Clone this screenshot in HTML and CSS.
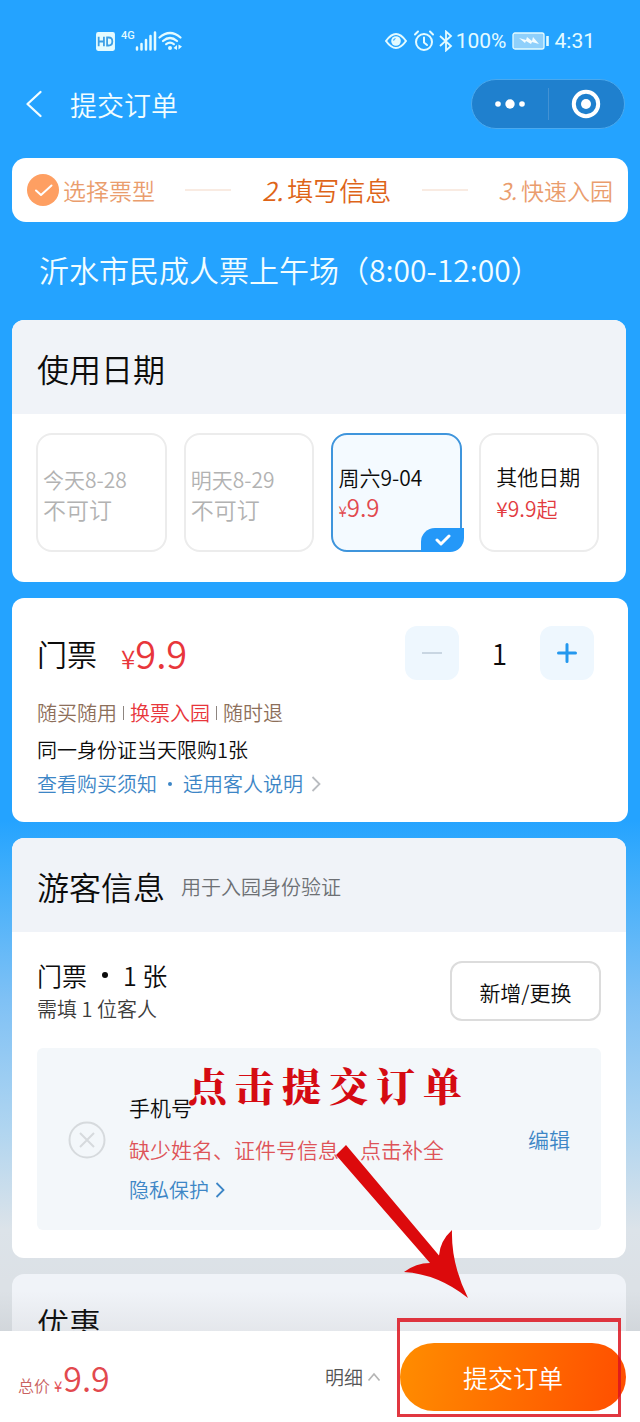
FILE: index.html
```html
<!DOCTYPE html>
<html lang="zh-CN">
<head>
<meta charset="utf-8">
<meta name="viewport" content="width=device-width, initial-scale=1">
<title>提交订单</title>
<link rel="stylesheet" href="styles.css">
</head>
<body>
<div class="app">
  <div class="content">
    <div class="status">
      <div class="status-group">
        <svg class="hd-icon" width="21" height="21" viewBox="0 0 20 20"><rect x="1" y="1" width="18" height="18" rx="2" fill="#e4fbff"/><path d="M3.500 5.500v9M8.500 5.500v9M3.500 10h5M11.500 6.200v7.600h1.500q3.500 0 3.500-3.800t-3.500-3.800z" fill="none" stroke="#3b9fe6" stroke-width="1.700"/></svg>
        <span class="net">4G</span>
        <svg class="bars-icon" width="22" height="20" viewBox="0 0 22 20"><path d="M2 16.500v2M6.500 13v5.500M11 9v9.500M15.500 5v13.500M20 1.500v17" stroke="#e4fbff" stroke-width="2.500" stroke-linecap="round"/></svg>
        <svg class="wifi-icon" width="24" height="20" viewBox="0 0 24 20"><g fill="none" stroke="#e4fbff" stroke-width="2.200" stroke-linecap="round"><path d="M1.500 6.500q10.500-9 21 0M5 10q7-6 14 0M8.200 13.200q3.800-3 7.600 0"/></g><circle cx="12" cy="17" r="2" fill="#e4fbff"/><path d="M19 14v5l-3.500-2zM20.500 13.500v5l3.500-3z" fill="#e4fbff"/></svg>
      </div>
      <div class="status-group">
        <svg width="22" height="20" viewBox="0 0 22 20"><path d="M1 10Q11-4 21 10Q11 24 1 10z" fill="none" stroke="#e4fbff" stroke-width="2"/><circle cx="11" cy="10" r="4.800" fill="#e4fbff"/><path d="M8.500 9.500a3 3 0 0 1 2-2" fill="none" stroke="#24a3ff" stroke-width="1.200"/></svg>
        <svg class="alarm-icon" width="22" height="22" viewBox="0 0 22 22"><g fill="none" stroke="#e4fbff" stroke-width="2" stroke-linecap="round"><circle cx="11" cy="12" r="8"/><path d="M11 7.500v5l3 2.500M2 4.500l3-3M20 4.500l-3-3"/></g></svg>
        <svg class="bt-icon" width="14" height="22" viewBox="0 0 14 22"><path d="M1 6l11 10-5 4.500v-19L12 6 1 16" fill="none" stroke="#e4fbff" stroke-width="1.800"/></svg>
        <span class="status-text">100%</span>
        <svg class="battery-icon" width="38" height="18" viewBox="0 0 38 18"><rect x="1" y="1" width="31" height="16" rx="2" fill="#8fd0fb" stroke="#e4fbff" stroke-width="1.300"/><path d="M7 6l7 2 1-3 5 4 1-4 6 7-7-2-1 2-5-3-1 2z" fill="#f4fdff"/><path d="M35.500 4v10" stroke="#e4fbff" stroke-width="2.600"/></svg>
        <span class="status-text">4:31</span>
      </div>
    </div>

    <header class="nav">
      <button class="back" aria-label="返回"><svg width="18" height="28" viewBox="0 0 18 28"><path d="M15.500 2L2.500 14l13 12" fill="none" stroke="#f2fdff" stroke-width="2.300" stroke-linecap="round" stroke-linejoin="round"/></svg></button>
      <h1 class="nav-title">提交订单</h1>
      <div class="capsule">
        <button class="capsule-btn" aria-label="更多"><svg width="32" height="12" viewBox="0 0 32 12"><g fill="#fff"><circle cx="4" cy="6" r="2.800"/><circle cx="16" cy="6" r="4.700"/><circle cx="28" cy="6" r="2.800"/></g></svg></button>
        <button class="capsule-btn" aria-label="关闭"><svg width="30" height="30" viewBox="0 0 30 30"><circle cx="15" cy="15" r="12.200" fill="none" stroke="#fff" stroke-width="4"/><circle cx="15" cy="15" r="5" fill="#fff"/></svg></button>
      </div>
    </header>

    <ol class="steps">
      <li class="step"><svg class="step-icon" width="32" height="32" viewBox="0 0 32 32"><circle cx="16" cy="16" r="16" fill="#fe9f62"/><path d="M9 16.500l5 4.500 10.500-9.500" fill="none" stroke="#fff" stroke-width="2" stroke-linecap="round" stroke-linejoin="round"/></svg>选择票型</li>
      <li class="dash" aria-hidden="true"></li>
      <li class="step current"><i>2.</i>填写信息</li>
      <li class="dash" aria-hidden="true"></li>
      <li class="step"><i>3.</i>快速入园</li>
    </ol>

    <p class="product">沂水市民成人票上午场（8:00-12:00）</p>

    <main class="cards">
      <section class="card narrow">
        <div class="card-head"><h2>使用日期</h2></div>
        <div class="dates">
          <button class="date off" disabled><span>今天8-28</span><span class="date-note">不可订</span></button>
          <button class="date off" disabled><span>明天8-29</span><span class="date-note">不可订</span></button>
          <button class="date selected"><span>周六9-04</span><span class="date-price"><small>¥</small>9.9</span>
            <span class="tick"><svg width="16" height="12" viewBox="0 0 16 12"><path d="M2 6l4 4 8-8" fill="none" stroke="#fff" stroke-width="3" stroke-linecap="round" stroke-linejoin="round"/></svg></span>
          </button>
          <button class="date other"><span>其他日期</span><span class="from">¥9.9起</span></button>
        </div>
      </section>

      <section class="card ticket">
        <div class="ticket-row">
          <h3 class="ticket-name">门票</h3>
          <span class="ticket-price"><small>¥</small>9.9</span>
          <div class="stepper">
            <button class="step-btn" aria-label="减少"><svg width="22" height="22" viewBox="0 0 22 22"><path d="M1 11h20" stroke="#c9d6e2" stroke-width="2"/></svg></button>
            <output class="qty">1</output>
            <button class="step-btn" aria-label="增加"><svg width="22" height="22" viewBox="0 0 22 22"><path d="M2.500 11h17M11 2.500v17" stroke="#2498ee" stroke-width="3" stroke-linecap="round"/></svg></button>
          </div>
        </div>
        <p class="tags"><span>随买随用</span><span class="bar"></span><span class="hot">换票入园</span><span class="bar"></span><span>随时退</span></p>
        <p class="limit">同一身份证当天限购1张</p>
        <p class="links"><a href="#">查看购买须知</a><span class="dot"></span><a href="#">适用客人说明</a><svg class="more" width="10" height="18" viewBox="0 0 10 18"><path d="M1.500 2L8.500 9l-7 7" fill="none" stroke="#b9bcc0" stroke-width="1.800"/></svg></p>
      </section>

      <section class="card narrow">
        <div class="card-head"><h2>游客信息</h2><span class="hint">用于入园身份验证</span></div>
        <div class="guest">
          <div class="guest-top">
            <div>
              <h3 class="guest-title">门票<span class="dot dark"></span>1 张</h3>
              <p class="guest-need">需填 1 位客人</p>
            </div>
            <button class="change">新增/更换</button>
          </div>
          <div class="panel">
            <button class="remove" aria-label="删除"><svg width="38" height="38" viewBox="0 0 38 38"><g fill="none" stroke="#d6dadd" stroke-width="2"><circle cx="19" cy="19" r="17.500"/><path d="M12 12l14 14M26 12L12 26"/></g></svg></button>
            <div class="panel-text">
              <p class="phone">手机号</p>
              <p class="missing">缺少姓名、证件号信息，点击补全</p>
              <a class="privacy" href="#">隐私保护<svg width="10" height="18" viewBox="0 0 10 18"><path d="M1.500 2L8.500 9l-7 7" fill="none" stroke="#3d86c6" stroke-width="1.800"/></svg></a>
            </div>
            <a class="edit" href="#">编辑</a>
          </div>
        </div>
      </section>

      <section class="card narrow">
        <div class="card-head"><h2>优惠</h2></div>
      </section>
    </main>
  </div>

  <footer class="footer">
    <p class="total"><span class="total-label">总价</span><small>¥</small>9.9</p>
    <button class="detail">明细<svg width="14" height="10" viewBox="0 0 14 10"><path d="M1.500 8.500L7 2l5.500 6.500" fill="none" stroke="#b5b5b5" stroke-width="1.700"/></svg></button>
    <div class="submit-wrap">
      <button class="submit">提交订单</button>
      <span class="frame"></span>
    </div>
  </footer>

  <p class="callout"><span>点</span><span>击</span><span>提</span><span>交</span><span>订</span><span>单</span></p>
  <svg class="arrow" width="140" height="160" viewBox="0 0 140 160"><path d="M7 15L17 5 110 115.500Q111 101 123 90Q122 124 139 158Q109 134 75 132Q87 123 101 123z" fill="#dc0a0c"/></svg>
</div>
</body>
</html>
```
FILE: styles.css
```css
* { box-sizing: border-box; }

body, h1, h2, h3, p, ol { margin: 0; padding: 0; }

body {
  font-family: "Noto Sans CJK SC", sans-serif;
  font-weight: 350;
  color: #0c0c0c;
}

h1, h2, h3 { font-weight: inherit; }

button {
  border: 0;
  padding: 0;
  background: none;
  color: inherit;
  font: inherit;
}

a { color: #3d86c6; text-decoration: none; }
svg { display: block; flex: none; }

.app {
  position: relative;
  display: flex;
  flex-direction: column;
  height: 100vh;
  overflow: hidden;
  background: linear-gradient(#24a3ff 0, #24a3ff 820px, #38abfc 860px, #7fc1f5 1000px, #b0d5f0 1130px, #dce3e9 1230px, #dce1e6 1280px);
}

.content {
  flex: 1;
  min-height: 0;
  overflow: hidden;
}

/* status bar and navigation */
.status {
  display: flex;
  justify-content: space-between;
  align-items: center;
  padding: 26px 45px 0 95px;
}

.status-group { display: flex; align-items: center; height: 30px; color: #e4fbff; }
.net { align-self: flex-start; margin-left: 5px; font: 500 11px/20px Roboto, sans-serif; }
.wifi-icon { margin-left: 1px; }
.alarm-icon { margin: 0 4px 0 6px; }
.bt-icon { margin-right: 3px; }
.status-text { font: 400 21px/30px Roboto, sans-serif; }
.battery-icon { margin: 0 5px 0 5px; }

.nav {
  display: flex;
  align-items: center;
  padding: 23px 15px 0 25px;
  color: #f2fdff;
}

.nav-title { flex: 1; padding-top: 2px; margin-left: 27px; font-size: 27px; line-height: 40px; }

.capsule {
  display: flex;
  width: 154px;
  height: 50px;
  border: 1px solid #4aa9ee;
  border-radius: 25px;
  background: #1f80ce;
}

.capsule-btn { flex: 1; display: flex; align-items: center; justify-content: center; }
.capsule-btn + .capsule-btn { position: relative; }
.capsule-btn + .capsule-btn::before {
  content: "";
  position: absolute;
  left: 0;
  top: 8px;
  bottom: 8px;
  width: 1px;
  background: #4292d4;
}

/* progress steps */
.steps {
  display: flex;
  justify-content: space-between;
  align-items: center;
  height: 64px;
  margin: 29px 12px 0;
  padding: 0 15px;
  border-radius: 14px;
  background: #fff;
  list-style: none;
}

.step { display: flex; align-items: center; color: #ea9d6d; font-size: 23px; line-height: 40px; }
.step-icon { margin-right: 4px; }
.step i { margin-right: 4px; }
.step.current { color: #de6418; font-size: 26px; }
.dash { width: 46px; height: 2px; background: #f9ebe2; }

.product {
  padding: 25px 12px 29px 39px;
  color: #f2fdff;
  font-size: 30px;
  line-height: 44px;
}

/* cards */
.cards { display: flex; flex-direction: column; gap: 16px; padding: 0 12px; }
.card { overflow: hidden; border-radius: 12px; background: #fff; }
.narrow { margin-right: 2px; }
.card-head { display: flex; align-items: center; height: 94px; padding: 2px 25px 0; background: #f0f3f8; }
.card-head h2 { font-size: 32px; line-height: 48px; }
.hint { margin-left: 16px; color: #6d7074; font-size: 20px; }

.dates { display: grid; grid-template-columns: 131fr 131fr 131fr 120fr; gap: 17px; padding: 19px 27px 30px 24px; }

.date {
  position: relative;
  display: flex;
  flex-direction: column;
  justify-content: center;
  height: 119px;
  padding: 2px 0 0 5px;
  border: 2px solid #ececec;
  border-radius: 16px;
  font-size: 21px;
  line-height: 30px;
  text-align: left;
}

.date.off { color: #b2b2b2; }
.date-note { font-size: 23px; }
.date.selected { border-color: #3f95dc; background: #f4faff; }
.date-price { color: #e2494e; font-size: 24px; }
.date-price small { font-size: 15px; }
.date.other { padding: 0 0 2px 15px; line-height: 32px; }
.from { color: #e23b40; }

.tick {
  position: absolute;
  right: -4px;
  bottom: -2px;
  display: flex;
  align-items: center;
  justify-content: center;
  width: 43px;
  height: 24px;
  border-radius: 14px 0 14px 0;
  background: #2498f8;
}

/* ticket */
.ticket { padding: 28px 34px 21px 25px; font-size: 20px; line-height: 34px; }
.ticket-row { display: flex; align-items: center; height: 54px; margin-bottom: 16px; }
.ticket-name { font-size: 30px; }
.ticket-price { padding-top: 4px; margin-left: 24px; color: #e8363b; font-size: 38px; line-height: 54px; }
.ticket-price small { font-size: 26px; }
.stepper { display: flex; margin-left: auto; }
.step-btn { display: flex; align-items: center; justify-content: center; width: 54px; height: 54px; border-radius: 12px; background: #eef7fe; }
.qty { width: 81px; font-size: 28px; line-height: 54px; text-align: center; }

.tags { display: flex; align-items: center; margin-bottom: 3px; color: #8d6f5a; }
.bar { width: 1px; height: 14px; margin: 0 6px; background: #8d8580; }
.hot { color: #e8363b; }
.links { display: flex; align-items: center; }
.dot { width: 4px; height: 4px; margin: 0 11px; border-radius: 50%; background: #3d86c6; }
.more { margin-left: 8px; }

/* guest */
.guest { padding: 29px 25px 28px; }
.guest-top { display: flex; justify-content: space-between; align-items: flex-start; margin-bottom: 25px; }
.guest-title { display: flex; align-items: center; font-size: 25px; line-height: 28px; }
.dot.dark { width: 6px; height: 6px; margin: 0 15px; background: #0c0c0c; }
.guest-need { margin-top: 6px; color: #3c3c3c; font-size: 20px; line-height: 28px; }

.change {
  width: 151px;
  height: 60px;
  padding-top: 2px;
  border: 2px solid #dcdcdc;
  border-radius: 12px;
  font-size: 21px;
}

.panel { display: flex; align-items: center; padding: 38px 31px 20px; border-radius: 6px; background: #f3f7fa; }
.remove { margin-bottom: 16px; }
.panel-text { flex: 1; margin-left: 23px; font-size: 21px; line-height: 42px; }
.missing { color: #de5358; }
.privacy { display: flex; align-items: center; font-size: 20px; line-height: 40px; }
.privacy svg { margin-left: 6px; }
.edit { margin-bottom: 18px; font-size: 21px; }

/* footer */
.footer { display: flex; align-items: center; height: 91px; padding: 0 14px 0 18px; background: #fff; }
.footer::before {
  content: "";
  position: absolute;
  left: 0;
  right: 0;
  bottom: 91px;
  height: 40px;
  background: linear-gradient(rgba(90, 90, 90, 0), rgba(90, 90, 90, 0.08));
}

.total { padding-top: 10px; color: #e2494e; font-size: 34px; line-height: 50px; }
.total small { margin: 0 1px 0 4px; font-size: 15px; }
.total-label { color: #c9625f; font-size: 16px; }
.detail { display: flex; align-items: center; gap: 4px; margin: 0 19px 0 auto; color: #555; font-size: 19px; }
.submit-wrap { position: relative; }

.submit {
  width: 226px;
  height: 68px;
  border-radius: 34px;
  background: linear-gradient(100deg, #ff8d00, #ff4e00);
  color: #fff;
  font-size: 25px;
}

/* annotations over the page */
.frame {
  position: absolute;
  left: -3px;
  right: 5px;
  top: -25px;
  bottom: -6px;
  border: 3px solid rgba(220, 20, 30, 0.85);
  border-top-width: 4px;
}

.callout {
  position: absolute;
  right: 178px;
  bottom: 310px;
  display: flex;
  gap: 8px;
  color: #d50b12;
  font-family: "Noto Serif CJK SC", "Noto Sans CJK SC", serif;
  font-size: 39px;
  font-weight: 900;
  line-height: 56px;
}

.arrow { position: absolute; right: 171px; bottom: 122px; }
```
